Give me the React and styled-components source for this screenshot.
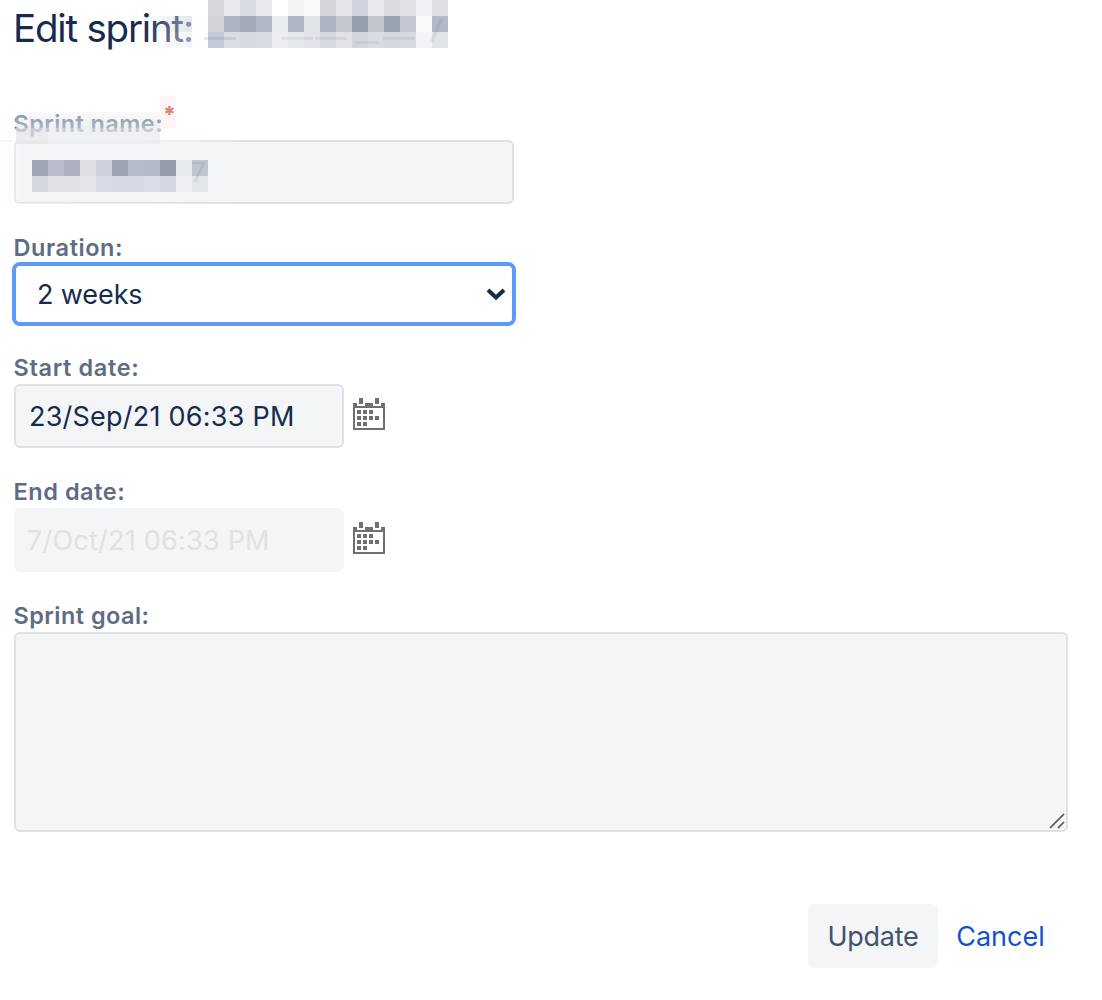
import React from "react";
import styled, { createGlobalStyle } from "styled-components";

const GlobalStyle = createGlobalStyle`
  *, *::before, *::after { box-sizing: border-box; }
  body { margin: 0; background: #fff; color: #172b4d; font-family: Inter, "Liberation Sans", sans-serif; }
  input, select, textarea, button { font: inherit; color: inherit; }
`;

const Dialog = styled.main`
  display: flex;
  flex-direction: column;
  width: 1102px;
  height: 1000px;
  padding: 0 34px 32px 14px;
  overflow: hidden;
`;

const Header = styled.header`
  display: flex;
  position: relative;
  height: 112px;
`;

const Title = styled.h1`
  margin: 4px 0 0 -1px;
  width: 195px;
  font-size: 38.5px;
  line-height: 48px;
  font-weight: 400;
  letter-spacing: -1.2px;
  white-space: nowrap;
`;

const TitleFade = styled.span`
  position: absolute;
  left: 130px;
  top: 16px;
  width: 64px;
  height: 32px;
  background:
    linear-gradient(90deg, rgba(225,227,232,0), rgba(214,217,223,0.62)) 0 0 / 48px 16px no-repeat,
    linear-gradient(90deg, rgba(235,236,240,0), rgba(238,239,242,0.6)) 0 16px / 48px 16px no-repeat,
    linear-gradient(rgba(250,250,251,0.3), rgba(250,250,251,0.3)) 48px 0 / 16px 32px no-repeat;
`;

const Mosaic = styled.div`
  display: grid;
  position: relative;
  flex: none;
  width: max-content;
  grid-template-columns: repeat(${(p) => p.$columns}, 16px);
  grid-auto-rows: 16px;
  align-content: start;
`;

const Tile = styled.i`
  background: ${(p) => p.$color};
`;

const GhostDigit = styled.span`
  position: absolute;
  right: ${(p) => p.$right}px;
  top: ${(p) => p.$top}px;
  font-size: ${(p) => p.$size}px;
  line-height: 1;
  color: rgba(90, 100, 120, 0.15);
`;

const Stroke = styled.span`
  position: absolute;
  left: ${(p) => p.$x}px;
  top: ${(p) => p.$y}px;
  width: ${(p) => p.$w}px;
  height: 3px;
  background: rgba(110, 120, 140, ${(p) => p.$alpha || 0.1});
`;

const Slash = styled.span`
  position: absolute;
  left: 227px;
  top: 18px;
  width: 3px;
  height: 25px;
  background: rgba(90, 100, 120, 0.1);
  transform: rotate(24deg);
`;

const Form = styled.form`
  display: flex;
  flex-direction: column;
  flex: 1;
`;

const Field = styled.div`
  position: relative;
  display: flex;
  flex-direction: column;
  align-items: flex-start;
  margin-bottom: ${(p) => p.$gap ?? 32}px;
`;

const Label = styled.label`
  height: 28px;
  margin-left: -0.5px;
  font-size: 23.5px;
  line-height: 24px;
  font-weight: 600;
  letter-spacing: ${(p) => p.$spacing ?? 0.45}px;
  color: #5e6c84;
  white-space: nowrap;
`;

const Required = styled.sup`
  position: absolute;
  left: 149px;
  top: -10px;
  font-size: 22px;
  line-height: 24px;
  font-weight: 800;
  color: #d98078;
`;

const LabelFade = styled.span`
  position: absolute;
  left: 2px;
  top: 0;
  width: 144px;
  height: 32px;
  background:
    linear-gradient(180deg, rgba(236,237,240,0.3), rgba(228,230,234,0.6)) 0 0 / 144px 16px no-repeat,
    linear-gradient(rgba(222,223,228,0.6), rgba(222,223,228,0.6)) 0 16px / 32px 16px no-repeat,
    linear-gradient(rgba(229,230,235,0.55), rgba(229,230,235,0.55)) 32px 16px / 112px 16px no-repeat;
`;

const RequiredTint = styled.span`
  position: absolute;
  left: 146px;
  top: -16px;
  width: 16px;
  height: 32px;
  background: rgba(240, 190, 180, 0.14);
`;

const Row = styled.div`
  display: flex;
  gap: 9px;
`;

const TextInput = styled.input`
  width: ${(p) => p.$width}px;
  height: 64px;
  padding: 0 13px 0 ${(p) => p.$indent ?? 13}px;
  border: 2px solid #dfe1e6;
  border-radius: 6px;
  background: #f4f5f7;
  font-size: 27px;
  letter-spacing: 0.23px;
  outline: none;
  &:disabled { border-color: #f4f5f7; color: #dfe1e6; }
`;

const NameBox = styled.div`
  position: relative;
  width: 500px;
  height: 64px;
  padding: 18px 16px;
  border: 2px solid #dfe1e6;
  border-radius: 6px;
  background: #f4f5f7;
`;

const EdgeFade = styled.span`
  position: absolute;
  left: -16px;
  top: -14px;
  width: 240px;
  height: 80px;
  background:
    linear-gradient(90deg, rgba(252,252,253,0.4) 60%, rgba(255,255,255,0)) 0 0 / 100% 12px no-repeat,
    linear-gradient(90deg, rgba(248,248,250,0.95) 60%, rgba(255,255,255,0)) 0 12px / 100% 2px no-repeat,
    linear-gradient(90deg, rgba(252,252,253,0.8), rgba(252,252,253,0)) 0 14px / 24px 66px no-repeat,
    linear-gradient(90deg, rgba(255,255,255,0.65), rgba(255,255,255,0)) 0 100% / 100% 5px no-repeat;
`;

const SelectWrap = styled.div`
  position: relative;
  margin: -2px;
`;

const Select = styled.select`
  display: block;
  appearance: none;
  width: 504px;
  height: 64px;
  padding: 0 40px 0 21px;
  border: 4px solid #5e9bf8;
  border-radius: 8px;
  background: #fff;
  font-size: 27px;
  letter-spacing: -0.1px;
  outline: none;
`;

const Chevron = styled.svg`
  position: absolute;
  left: 474px;
  top: 25px;
  pointer-events: none;
`;

const CalendarButton = styled.button`
  width: 32px;
  height: 34px;
  margin-top: 13px;
  padding: 0;
  border: 0;
  background: none;
  color: #707070;
  line-height: 0;
`;

const GoalWrap = styled.div`
  position: relative;
`;

const TextArea = styled.textarea`
  display: block;
  width: 1054px;
  height: 200px;
  border: 2px solid #dfe1e6;
  border-radius: 6px;
  background: #f4f5f7;
  resize: none;
  outline: none;
`;

const Grip = styled.svg`
  position: absolute;
  right: 3px;
  bottom: 3px;
`;

const Footer = styled.footer`
  display: flex;
  justify-content: flex-end;
  align-items: center;
  margin-top: auto;
  padding-right: 23px;
  gap: 18px;
`;

const Button = styled.button`
  width: ${(p) => (p.$link ? 89 : 130)}px;
  height: 64px;
  padding: 0;
  border: 0;
  border-radius: 6px;
  background: ${(p) => (p.$link ? "transparent" : "#f4f5f7")};
  color: ${(p) => (p.$link ? "#1452cc" : "#42526e")};
  font-size: 27px;
  letter-spacing: ${(p) => p.$spacing ?? 0}px;
  white-space: nowrap;
`;

const TITLE_TILES = `
d5d7db e9eaed d9dce2 e8e9ec ffffff f3f4f6 f8f9fb d5d6da e4e5e8 d0d4df e9eaec dbdce1 dfe1e4 f0f1f3 dfe0e4
d2d4da adb4c2 a4abb8 b1b7c3 eaebed b0b7c4 e2e4e8 afb4c1 c2c7d0 959eac c2c6cf 9aa3b2 c2c7d1 fafafa b4b9c5
c4cad5 dadde3 d5d9e1 d9dce3 eceef0 e5e7eb e1e3e8 d7d9de e2e3e7 d1d5de d9dce2 d5d8df d6d9e1 f3f4f6 e3e4e9`.trim().split(/\s+/);

const NAME_TILES = `
9fa6b3 b9bdc9 adb1bf dddee4 cdd2dc 9ca4b2 b5bbc8 b4b9c6 959daa e7e9ed c0c5d0
d5d8de e0e2e6 e0e2e8 e4e6ea d9dce6 d6dae4 d5d9e3 dadde7 d3d8e2 eeeff1 e3e5ea`.trim().split(/\s+/);

function Tiles({ colors, columns, children }) {
  return (
    <Mosaic $columns={columns} aria-hidden="true">
      {colors.map((c, i) => <Tile key={i} $color={`#${c}`} />)}
      {children}
    </Mosaic>
  );
}

function Calendar() {
  return (
    <CalendarButton type="button" aria-label="Pick a date">
      <svg width="32" height="34" viewBox="0 0 32 34" fill="currentColor" shapeRendering="crispEdges">
        <path d="M6 1h4v6H6zM22 1h4v6h-4zM0 6h4v3h8V6h8v3h8V6h4v27H0zM2 11v20h28V11z" fillRule="evenodd" />
        <path d="M4 13h4v4H4zM10 13h4v4h-4zM16 13h4v4h-4zM4 19h4v4H4zM10 19h4v4h-4zM16 19h4v4h-4zM22 19h4v4h-4zM4 25h4v4H4zM10 25h4v4h-4z" />
      </svg>
    </CalendarButton>
  );
}

export default function App() {
  return (
    <>
      <GlobalStyle />
      <Dialog>
        <Header>
          <Title>Edit sprint:</Title>
          <TitleFade />
          <Tiles colors={TITLE_TILES} columns={15}>
            <Stroke $x={-4} $y={37} $w={32} $alpha={0.15} />
            <Stroke $x={73} $y={37} $w={32} />
            <Stroke $x={107} $y={37} $w={32} />
            <Stroke $x={147} $y={41} $w={24} />
            <Stroke $x={175} $y={37} $w={32} />
            <Slash />
          </Tiles>
        </Header>
        <Form>
          <Field>
            <Label $spacing={0.4}>Sprint name:</Label>
            <NameBox>
              <EdgeFade />
              <Tiles colors={NAME_TILES} columns={11}>
                <GhostDigit $right={2} $top={-1} $size={27}>7</GhostDigit>
              </Tiles>
            </NameBox>
            <LabelFade />
            <RequiredTint />
            <Required>*</Required>
          </Field>
          <Field>
            <Label htmlFor="duration" $spacing={0.55}>Duration:</Label>
            <SelectWrap>
              <Select id="duration" defaultValue="2"><option value="2">2 weeks</option></Select>
              <Chevron width="20" height="14" viewBox="0 0 20 14" fill="none" stroke="#172b4d" strokeWidth="4">
                <path d="M2 3l8 7.5L18 3" />
              </Chevron>
            </SelectWrap>
          </Field>
          <Field>
            <Label htmlFor="start" $spacing={0.65}>Start date:</Label>
            <Row>
              <TextInput id="start" $width={330} defaultValue="23/Sep/21 06:33 PM" />
              <Calendar />
            </Row>
          </Field>
          <Field>
            <Label htmlFor="end" $spacing={0.55}>End date:</Label>
            <Row>
              <TextInput id="end" $width={330} $indent={11} disabled defaultValue="7/Oct/21 06:33 PM" />
              <Calendar />
            </Row>
          </Field>
          <Field $gap={0}>
            <Label htmlFor="goal">Sprint goal:</Label>
            <GoalWrap>
              <TextArea id="goal" />
              <Grip width="16" height="16" viewBox="0 0 16 16" stroke="#555" strokeWidth="1.7">
                <path d="M1 15L15 1M9 15l6-6" />
              </Grip>
            </GoalWrap>
          </Field>
          <Footer>
            <Button type="button" $spacing={-0.3}>Update</Button>
            <Button type="button" $link>Cancel</Button>
          </Footer>
        </Form>
      </Dialog>
    </>
  );
}
